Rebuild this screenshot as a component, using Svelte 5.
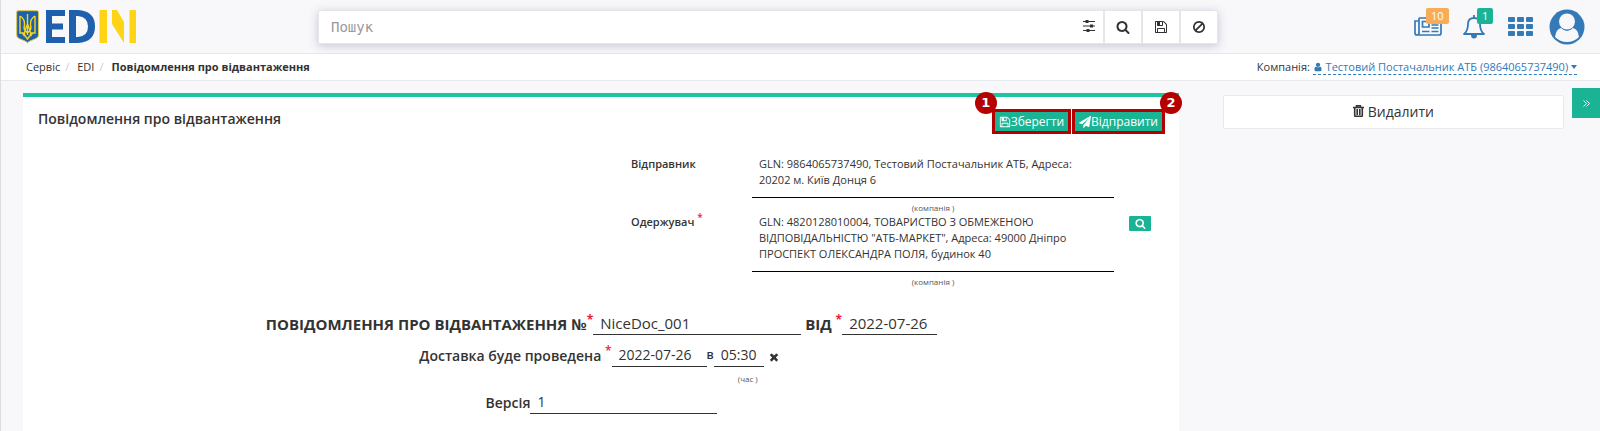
<script>
  const icons = {
    search: 'M1216 832q0-185-131.500-316.500T768 384 451.500 515.500 320 832t131.500 316.500T768 1280t316.500-131.500T1216 832zm512 832q0 52-38 90t-90 38q-54 0-90-38l-343-342q-179 124-399 124-143 0-273.500-55.500t-225-150-150-225T64 832t55.500-273.500 150-225 225-150T768 128t273.500 55.500 225 150 150 225T1472 832q0 220-124 399l343 343q37 37 37 90z',
    save: 'M512 1536h768v-384H512v384zm896 0h128V640q0-14-10-38.500t-20-34.500l-281-281q-10-10-34-20t-39-10v416q0 40-28 68t-68 28H480q-40 0-68-28t-28-68V256H256v1280h128v-416q0-40 28-68t68-28h832q40 0 68 28t28 68v416zM1024 608V288q0-13-9.500-22.500T992 256H800q-13 0-22.500 9.500T768 288v320q0 13 9.500 22.500T800 640h192q13 0 22.500-9.500t9.500-22.500zm640 32v928q0 40-28 68t-68 28H224q-40 0-68-28t-28-68V224q0-40 28-68t68-28h928q40 0 88 20t76 48l280 280q28 28 48 76t20 88z',
    ban: 'M1440 893q0-161-87-295l-754 753q137 89 297 89 111 0 211.500-43.500t173.500-116.500 116-174.500 43-212.500zm-999 299l755-754q-135-91-300-91-148 0-273 73T425 619t-73 274q0 162 89 299zm1223-299q0 157-61 300t-163.500 246-245 164-298.500 61-298.500-61-245-164T189 1193t-61-300 61-299.500T352.500 348t245-164T896 123t298.500 61 245 164T1603 593.500t61 299.500z',
    plane: 'M1764 11q33 24 27 64l-256 1536q-5 29-32 45-14 8-31 8-11 0-24-5l-453-185-242 295q-18 23-49 23-13 0-22-4-19-7-30.500-23.500T640 1728v-349l864-1059-1069 925-395-162q-37-14-40-55-2-40 32-59L1696 9q15-9 32-9 20 0 36 11z',
    user: 'M1536 1399q0 109-62.500 187t-150.500 78H469q-88 0-150.500-78T256 1399q0-85 8.500-160.500t31.500-152 58.500-131 94-89T583 832q131 128 313 128t313-128q76 0 134.500 34.500t94 89 58.500 131 31.500 152 8.500 160.500zm-256-887q0 159-112.500 271.500T896 896 624.500 783.500 512 512t112.500-271.500T896 128t271.500 112.500T1280 512z',
    times: 'M1490 1322q0 40-28 68l-136 136q-28 28-68 28t-68-28l-294-294-294 294q-28 28-68 28t-68-28l-136-136q-28-28-28-68t28-68l294-294-294-294q-28-28-28-68t28-68l136-136q28-28 68-28t68 28l294 294 294-294q28-28 68-28t68 28l136 136q28 28 28 68t-28 68l-294 294 294 294q28 28 28 68z'
  };
  const sender = 'GLN: 9864065737490, Тестовий Постачальник АТБ, Адреса: 20202 м. Київ Донця 6';
  const receiver = 'GLN: 4820128010004, ТОВАРИСТВО З ОБМЕЖЕНОЮ ВІДПОВІДАЛЬНІСТЮ "АТБ-МАРКЕТ", Адреса: 49000 Дніпро ПРОСПЕКТ ОЛЕКСАНДРА ПОЛЯ, будинок 40';
  let number = $state('NiceDoc_001');
  let date = $state('2022-07-26');
  let deliveryDate = $state('2022-07-26');
  let time = $state('05:30');
  let version = $state('1');
</script>

{#snippet icon(name, size)}
  <svg width={size} height={size} viewBox="0 0 1792 1792" fill="currentColor" aria-hidden="true"><path d={icons[name]} /></svg>
{/snippet}

<div class="page">
  <header>
    <a class="logo" href="#home" aria-label="EDIN">
      <svg width="121" height="34" viewBox="0 0 121 34" aria-hidden="true">
        <path d="M2 .7H21Q22.500 .7 22.500 2.200V25Q22.500 27.500 20 28.500L14 31Q12.500 31.700 11.500 32.700Q10.500 31.700 9 31L3 28.500Q.7 27.500 .7 25V2.200Q.7 .7 2 .7Z" fill="#1e5fae" stroke="#d9c64a" />
        <path d="M11.500 4V25M4 6V23H8.500M19 6V23H14.500M4 6Q9 9 8.500 15Q7.500 19 9 20.500L11.500 23L14 20.500Q15.500 19 14.500 15Q14 9 19 6M11.500 14Q8 22 8.500 25L11.500 29L14.500 25Q15 22 11.500 14M6.500 23L8.500 26M16.500 23L14.500 26" fill="none" stroke="#f7d51d" stroke-width="1.400" />
        <path d="M30 0H49V6H36V13.500H47V19.500H36V27H49V33H30Z" fill="#1e5fae" />
        <path d="M53 0H62Q79 1 79 16.500Q79 32 62 33H53ZM60 6V27H62Q72 26 72 16.500Q72 7 62 6Z" fill="#1e5fae" fill-rule="evenodd" />
        <path d="M83.500 0H91V33H83.500ZM96 0H101L108 12V33L96 14ZM113.500 0H120V33H113.500Z" fill="#ffd316" />
      </svg>
    </a>
    <form class="search">
      <div class="field">
        <input type="text" placeholder="Пошук" aria-label="Пошук" />
        <button type="button" aria-label="Фільтри">
          <svg width="12" height="12" viewBox="0 0 12 12" fill="#333" aria-hidden="true"><path d="M0 1H12V2H0ZM0 5.500H12V6.500H0ZM0 10H12V11H0ZM2.500 0H5.500V3H2.500ZM7 4.500H10V7.500H7ZM3.500 9H6.500V12H3.500Z" /></svg>
        </button>
      </div>
      <button type="button" aria-label="Шукати">{@render icon('search', 14)}</button>
      <button type="button" aria-label="Зберегти пошук">{@render icon('save', 14)}</button>
      <button type="button" aria-label="Очистити">{@render icon('ban', 14)}</button>
    </form>
    <nav class="tools">
      <a href="#news" aria-label="Новини">
        <svg width="28" height="19" viewBox="0 0 28 19" fill="none" stroke="currentColor" stroke-width="1.700" aria-hidden="true"><path d="M5 1H27V16Q27 18 25 18H3Q1 18 1 16V4H5M5 1V16Q5 18 3 18M8.500 4.500H15V10H8.500ZM17.500 4.500H24.500M17.500 8H24.500M17.500 11H24.500M8 14.500H15.500M17.500 14.500H24.500" /></svg>
        <span class="badge orange">10</span>
      </a>
      <a href="#alerts" aria-label="Сповіщення">
        <svg width="22" height="24" viewBox="0 0 22 24" aria-hidden="true"><path d="M11 0V3M1 19Q5 16 5 9Q5 3 11 3Q17 3 17 9Q17 16 21 19Z" fill="none" stroke="currentColor" stroke-width="1.800" stroke-linejoin="round" /><path d="M8 20H14Q14 23.500 11 23.500Q8 23.500 8 20Z" fill="currentColor" /></svg>
        <span class="badge green">1</span>
      </a>
      <a href="#apps" aria-label="Додатки">
        <svg width="25" height="19" viewBox="0 0 25 19" fill="currentColor" aria-hidden="true">
          {#each [0, 7, 14] as y}
            {#each [0, 9, 18] as x}
              <rect {x} {y} width="7" height="5" rx="1" />
            {/each}
          {/each}
        </svg>
      </a>
      <a href="#profile" aria-label="Профіль">
        <svg width="36" height="36" viewBox="0 0 36 36" aria-hidden="true"><circle cx="18" cy="18" r="17.500" fill="currentColor" /><path d="M6 28Q7 20 12 19Q18 25 24 19Q29 20 30 28Q25 33 18 33Q11 33 6 28Z" fill="#f8f8fb" /><circle cx="18" cy="12.500" r="8" fill="#f8f8fb" /></svg>
      </a>
    </nav>
  </header>

  <div class="crumbs">
    <nav>
      <a href="#service">Сервіс</a><i>/</i><a href="#edi">EDI</a><i>/</i><strong>Повідомлення про відвантаження</strong>
    </nav>
    <div class="company">
      Компанія: <a href="#company">{@render icon('user', 10)} Тестовий Постачальник АТБ (9864065737490) <svg width="6" height="4" viewBox="0 0 6 4" fill="currentColor" aria-hidden="true"><path d="M0 0H6L3 4Z" /></svg></a>
    </div>
  </div>

  <div class="body">
    <main>
      <div class="head">
        <h1>Повідомлення про відвантаження</h1>
        <div class="actions">
          <div class="mark"><button type="button">{@render icon('save', 12)}Зберегти</button><b class="left">1</b></div>
          <div class="mark"><button type="button">{@render icon('plane', 12)}Відправити</button><b class="right">2</b></div>
        </div>
      </div>

      <div class="parties">
        <h2>Відправник</h2>
        <div><p>{sender}</p><small>(компанія )</small></div>
        <span></span>
        <h2>Одержувач <sup>*</sup></h2>
        <div><p>{receiver}</p><small>(компанія )</small></div>
        <button type="button" aria-label="Знайти компанію">{@render icon('search', 11)}</button>
      </div>

      <div class="line title">
        <label for="number">ПОВІДОМЛЕННЯ ПРО ВІДВАНТАЖЕННЯ №<sup>*</sup></label>
        <input id="number" class="wide" bind:value={number} />
        <label class="from" for="date">ВІД <sup>*</sup></label>
        <input id="date" class="date" bind:value={date} />
      </div>
      <div class="line delivery">
        <label for="delivery">Доставка буде проведена <sup>*</sup></label>
        <input id="delivery" class="date" bind:value={deliveryDate} />
        <label class="at" for="time">в</label>
        <div class="time"><input id="time" bind:value={time} /><small>(час )</small></div>
        <button type="button" aria-label="Очистити час">{@render icon('times', 12)}</button>
      </div>
      <div class="line">
        <label for="version">Версія</label>
        <input id="version" class="version" bind:value={version} />
      </div>
    </main>
    <aside>
      <button type="button"><svg width="11" height="12" viewBox="0 0 11 12" fill="none" stroke="currentColor" aria-hidden="true"><path d="M0 2.500H11M3.500 2V.7H7.500V2" stroke-width="1.400" /><path d="M1.700 3V10.500Q1.700 11.300 2.500 11.300H8.500Q9.300 11.300 9.300 10.500V3M4.200 4V10M6.800 4V10" stroke-width="1.600" /></svg> Видалити</button>
    </aside>
  </div>
  <button class="toggle" type="button" aria-label="Згорнути панель"><svg width="7" height="7" viewBox="0 0 7 7" fill="none" stroke="#fff" aria-hidden="true"><path d="M.5 .5L3.500 3.500L.5 6.500M3.500 .5L6.500 3.500L3.500 6.500" /></svg></button>
</div>

<style>
  :global(body) { background: #f8f8fb; }
  .page { position: relative; border-left: 1px solid #dcdde0; min-height: 100vh; box-sizing: border-box; overflow: hidden; font: 12px/16px "Open Sans", sans-serif; color: #333; }
  .page :global(*) { box-sizing: border-box; }
  svg { display: inline-block; flex: none; }
  a { color: inherit; text-decoration: none; }
  button { font: inherit; color: inherit; border: 0; padding: 0; cursor: pointer; }
  input { font: inherit; color: inherit; border: 0; outline: 0; min-width: 0; border-radius: 0; background: none; }
  h1, h2, p { margin: 0; }

  header { display: grid; grid-template-columns: 302px 1fr 382px; align-items: center; height: 54px; border-bottom: 1px solid #e7eaec; padding-right: 15px; }
  .logo { padding-left: 15px; display: flex; }
  .search { display: grid; grid-template-columns: 1fr 36px 36px 36px; gap: 2px; width: 100%; margin-left: 15px; height: 34px; border: 1px solid #e5e6e7; background: #e5e6e7; box-shadow: 0 2px 9px rgba(50, 50, 100, .25); }
  .search button { display: grid; place-items: center; background: #fff; }
  .field { display: flex; background: #fff; }
  .field input { flex: 1; padding: 0 12px; font: 14px "DejaVu Sans Mono", monospace; }
  .field input::placeholder { color: #999; opacity: 1; }
  .field button { width: 28px; padding-bottom: 2px; }
  .tools { display: flex; justify-content: flex-end; align-items: center; color: #337ab7; }
  .tools a { position: relative; display: flex; }
  .tools a + a { margin-left: 21px; }
  .tools a:nth-child(3) { margin-left: 23px; }
  .tools a:nth-child(4) { margin-left: 16px; }
  .badge { position: absolute; left: 12px; top: -9px; height: 16px; padding: 0 5px; border-radius: 2px; font-size: 11px; line-height: 16px; color: #fff; }
  .orange { background: #f8ac59; }
  .green { background: #1ab394; left: 14px; top: -7px; }

  .crumbs { display: flex; justify-content: space-between; height: 27px; padding: 0 23px 0 25px; background: #fff; border-bottom: 1px solid #e7eaec; font-size: 11px; line-height: 26px; }
  .crumbs i { color: #ccc; font-style: normal; padding: 0 8px 0 5px; }
  .company a { display: inline-block; height: 21px; color: #337ab7; border-bottom: 1px dashed #337ab7; }
  .company svg { vertical-align: -1px; }
  .company svg:last-child { vertical-align: 2px; }

  .body { display: grid; grid-template-columns: 1156fr 341fr; gap: 44px; padding: 12px 36px 0 22px; align-items: start; }
  main { min-height: calc(100vh - 93px); background: #fff; border-top: 4px solid #1fc4a0; padding: 12px 14px 16px 15px; }
  .head { display: flex; justify-content: space-between; height: 44px; }
  h1 { font-size: 14px; line-height: 20px; font-weight: 600; }
  .actions { display: flex; gap: 1px; }
  .mark { position: relative; height: 25px; border: 3px solid #b40000; }
  .mark button { display: flex; align-items: center; height: 19px; padding: 0 4px; background: #1ab394; color: #fff; }
  .mark b { position: absolute; top: -20px; width: 22px; height: 22px; border-radius: 50%; background: #b40000; color: #fff; text-align: center; font: bold 13px/22px "DejaVu Sans", sans-serif; }
  .left { left: -20px; }
  .right { right: -20px; }

  .parties { display: grid; grid-template-columns: 121fr 362fr 37fr; width: 100%; max-width: 520px; margin: 0 14px 0 auto; font-size: 11px; }
  .parties h2 { font-size: 11px; line-height: 22px; font-weight: 600; }
  .parties p { border-bottom: 1px solid #000; padding: 3px 32px 9px 7px; }
  .parties button { width: 22px; height: 15px; margin: 5px 0 0 15px; background: #1ab394; color: #fff; border-radius: 1px; display: grid; place-items: center; }
  small { display: block; padding-top: 6px; font-size: 8px; line-height: 7px; text-align: center; color: #555; }
  sup { color: #ed1c40; line-height: 0; font-size: 12px; }
  h2 sup { font-size: 10px; }

  .line { display: flex; justify-content: center; align-items: flex-start; font-size: 14px; line-height: 24px; }
  .line label { font-weight: 600; }
  .line input { height: 23px; border-bottom: 1px solid #333; padding: 0 7px; }
  .title { margin-top: 27px; font-size: 15px; }
  .title label { font-weight: 700; }
  .line .wide { width: 208px; }
  .line .from { margin-left: 4px; }
  .line .date { width: 95px; }
  .delivery { margin: 8px 0 11px; }
  .line .at { font-size: 12px; line-height: 22px; }
  .time { width: 50px; }
  .time input { display: block; width: 50px; }
  .time small { padding: 8px 0 5px 18px; line-height: 7px; }
  .delivery { margin-bottom: 4px; }
  .delivery button { background: none; margin: 0 4px; height: 26px; display: grid; place-items: center; }
  .line .version { width: 187px; }

  aside { padding-top: 2px; }
  aside button { width: 100%; height: 34px; background: #fff; border: 1px solid #e7eaec; border-radius: 2px; font-size: 14px; }
  .toggle { position: absolute; right: 0; top: 88px; width: 28px; height: 30px; background: #1ab394; display: grid; place-items: center; }
</style>
